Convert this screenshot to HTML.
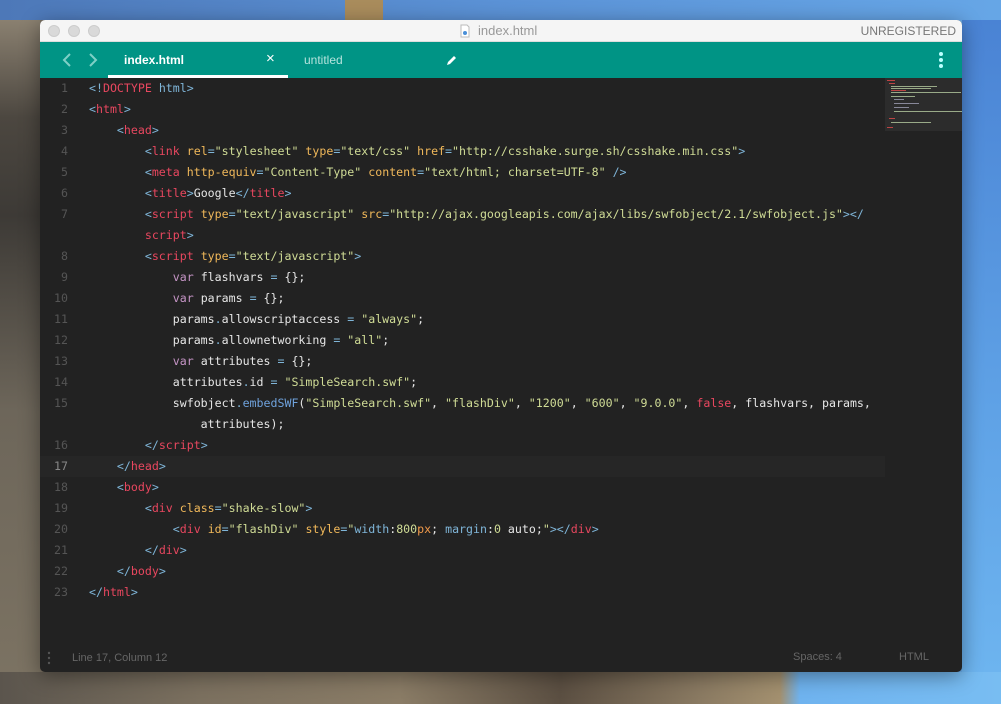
<!DOCTYPE html>
<html><head><style>
*{margin:0;padding:0;box-sizing:border-box}
body{width:1001px;height:704px;overflow:hidden;position:relative;font-family:"Liberation Sans",sans-serif;
background:linear-gradient(90deg,#6a6258 0,#7a7061 40px,#5a89c8 700px,#6aaeea 1001px);}
.bgtop{position:absolute;left:0;top:0;width:1001px;height:20px;background:linear-gradient(90deg,#4d78b8,#5b92d6 50%,#66a6e6)}
.tower{position:absolute;left:345px;top:0;width:38px;height:20px;background:#a98c5c}
.bgbot{position:absolute;left:0;top:672px;width:1001px;height:32px;background:linear-gradient(90deg,#5b554d 0,#7b705f 200px,#8a7c66 400px,#5b4f42 560px,#8a7a62 700px,#a3906f 780px,#6fb3ef 800px,#78bdf2 1001px)}
.bgleft{position:absolute;left:0;top:20px;width:40px;height:652px;background:linear-gradient(180deg,#8a8070,#4c4740 15%,#3d3a36 30%,#6d665a 60%,#7b7262)}
.bgright{position:absolute;left:962px;top:20px;width:39px;height:652px;background:linear-gradient(180deg,#4a83d4,#5fa2e6 60%,#6db4ef)}
.win{position:absolute;left:40px;top:20px;width:922px;height:652px;border-radius:5px;overflow:hidden;background:#222;box-shadow:0 4px 20px rgba(0,0,0,.4)}
.title{height:22px;background:#f5f5f5;border-bottom:1px solid #ddd;position:relative}
.dot{position:absolute;top:5px;width:12px;height:12px;border-radius:50%;background:#d9d9d9;border:1px solid #ccc}
.ttl{position:absolute;left:438px;top:3px;font-size:13px;color:#999}
.unreg{position:absolute;right:6px;top:4px;font-size:12px;color:#777}
.tabs{height:36px;background:#009485;position:relative;color:#fff}
.tabs span{position:absolute}
.code{position:absolute;left:0;top:58px;width:922px;font-family:"DejaVu Sans Mono","Liberation Mono",monospace;font-size:11.6px;}
.l{position:absolute;left:49px;white-space:pre;color:#e6e6e6;height:21px;line-height:21px}
.n{left:0;width:28px;text-align:right;color:#555}
.b{color:#7fb5d8}.t{color:#e8475f}.a{color:#f0b85a}.s{color:#d0dc96}.k{color:#c594c5}.f{color:#6fa2dc}.o{color:#f29a4a}
.status{position:absolute;left:0;bottom:0;width:922px;height:28px;font-size:11px;color:#666}
.mm{position:absolute;height:1px}
</style></head><body>
<div class="bgtop"></div><div class="tower"></div><div class="bgleft"></div><div class="bgright"></div><div class="bgbot"></div>
<div class="win">
 <div class="title">
  <div class="dot" style="left:8px"></div><div class="dot" style="left:28px"></div><div class="dot" style="left:48px"></div>
  <svg style="position:absolute;left:420px;top:4px" width="10" height="14"><path d="M1 1h6l2 2v10H1z" fill="#fff" stroke="#bbb"/><circle cx="5" cy="9" r="2" fill="#4a8fd8"/></svg>
  <div class="ttl">index.html</div><div class="unreg">UNREGISTERED</div>
 </div>
 <div class="tabs">
  <svg style="position:absolute;left:22px;top:11px" width="10" height="14"><path d="M8 1L2 7l6 6" stroke="#7fd0c6" stroke-width="2" fill="none"/></svg>
  <svg style="position:absolute;left:48px;top:11px" width="10" height="14"><path d="M2 1l6 6-6 6" stroke="#7fd0c6" stroke-width="2" fill="none"/></svg>
  <span style="left:84px;top:11px;font-size:12px;font-weight:bold">index.html</span>
  <span style="left:226px;top:8px;font-size:15px">×</span>
  <div style="position:absolute;left:68px;top:33px;width:180px;height:3px;background:#fff"></div>
  <span style="left:264px;top:11px;font-size:12px;color:#b5e3dd">untitled</span>
  <svg style="position:absolute;left:406px;top:13px" width="11" height="11"><path d="M1 10l1-3 6-6 2 2-6 6z" fill="#fff"/></svg>
  <svg style="position:absolute;left:898px;top:9px" width="6" height="18"><circle cx="3" cy="3" r="2" fill="#bff"/><circle cx="3" cy="9" r="2" fill="#bff"/><circle cx="3" cy="15" r="2" fill="#bff"/></svg>
 </div>
 <div style="position:absolute;left:845px;top:58px;width:77px;height:53px;background:#2c2c2c">
  <div class="mm" style="left:2px;top:2px;width:8px;background:#b44"></div>
  <div class="mm" style="left:4px;top:5px;width:6px;background:#b44"></div>
  <div class="mm" style="left:6px;top:8px;width:46px;background:#9a8"></div>
  <div class="mm" style="left:6px;top:10px;width:40px;background:#9a8"></div>
  <div class="mm" style="left:6px;top:12px;width:15px;background:#b44"></div>
  <div class="mm" style="left:6px;top:14px;width:70px;background:#9a8"></div>
  <div class="mm" style="left:6px;top:18px;width:24px;background:#9a8"></div>
  <div class="mm" style="left:9px;top:21px;width:10px;background:#889"></div>
  <div class="mm" style="left:9px;top:25px;width:25px;background:#889"></div>
  <div class="mm" style="left:9px;top:29px;width:15px;background:#889"></div>
  <div class="mm" style="left:9px;top:33px;width:68px;background:#9a8"></div>
  <div class="mm" style="left:4px;top:40px;width:6px;background:#b44"></div>
  <div class="mm" style="left:6px;top:44px;width:40px;background:#9a8"></div>
  <div class="mm" style="left:2px;top:49px;width:6px;background:#b44"></div>
 </div>
 <div style="position:absolute;left:0;top:436px;width:845px;height:21px;background:#262626"></div>
 <div class="code">
<div class="l n" style="top:0">1</div><div class="l" style="top:0"><span class="b">&lt;!</span><span class="t">DOCTYPE</span> <span class="b">html&gt;</span></div>
<div class="l n" style="top:21px">2</div><div class="l" style="top:21px"><span class="b">&lt;</span><span class="t">html</span><span class="b">&gt;</span></div>
<div class="l n" style="top:42px">3</div><div class="l" style="top:42px">    <span class="b">&lt;</span><span class="t">head</span><span class="b">&gt;</span></div>
<div class="l n" style="top:63px">4</div><div class="l" style="top:63px">        <span class="b">&lt;</span><span class="t">link</span> <span class="a">rel</span><span class="b">=</span><span class="s">"stylesheet"</span> <span class="a">type</span><span class="b">=</span><span class="s">"text/css"</span> <span class="a">href</span><span class="b">=</span><span class="s">"http://csshake.surge.sh/csshake.min.css"</span><span class="b">&gt;</span></div>
<div class="l n" style="top:84px">5</div><div class="l" style="top:84px">        <span class="b">&lt;</span><span class="t">meta</span> <span class="a">http-equiv</span><span class="b">=</span><span class="s">"Content-Type"</span> <span class="a">content</span><span class="b">=</span><span class="s">"text/html; charset=UTF-8"</span> <span class="b">/&gt;</span></div>
<div class="l n" style="top:105px">6</div><div class="l" style="top:105px">        <span class="b">&lt;</span><span class="t">title</span><span class="b">&gt;</span>Google<span class="b">&lt;/</span><span class="t">title</span><span class="b">&gt;</span></div>
<div class="l n" style="top:126px">7</div><div class="l" style="top:126px">        <span class="b">&lt;</span><span class="t">script</span> <span class="a">type</span><span class="b">=</span><span class="s">"text/javascript"</span> <span class="a">src</span><span class="b">=</span><span class="s">"http://ajax.googleapis.com/ajax/libs/swfobject/2.1/swfobject.js"</span><span class="b">&gt;&lt;/</span></div>
<div class="l" style="top:147px">        <span class="t">script</span><span class="b">&gt;</span></div>
<div class="l n" style="top:168px">8</div><div class="l" style="top:168px">        <span class="b">&lt;</span><span class="t">script</span> <span class="a">type</span><span class="b">=</span><span class="s">"text/javascript"</span><span class="b">&gt;</span></div>
<div class="l n" style="top:189px">9</div><div class="l" style="top:189px">            <span class="k">var</span> flashvars <span class="b">=</span> {};</div>
<div class="l n" style="top:210px">10</div><div class="l" style="top:210px">            <span class="k">var</span> params <span class="b">=</span> {};</div>
<div class="l n" style="top:231px">11</div><div class="l" style="top:231px">            params<span class="b">.</span>allowscriptaccess <span class="b">=</span> <span class="s">"always"</span>;</div>
<div class="l n" style="top:252px">12</div><div class="l" style="top:252px">            params<span class="b">.</span>allownetworking <span class="b">=</span> <span class="s">"all"</span>;</div>
<div class="l n" style="top:273px">13</div><div class="l" style="top:273px">            <span class="k">var</span> attributes <span class="b">=</span> {};</div>
<div class="l n" style="top:294px">14</div><div class="l" style="top:294px">            attributes<span class="b">.</span>id <span class="b">=</span> <span class="s">"SimpleSearch.swf"</span>;</div>
<div class="l n" style="top:315px">15</div><div class="l" style="top:315px">            swfobject<span class="b">.</span><span class="f">embedSWF</span>(<span class="s">"SimpleSearch.swf"</span>, <span class="s">"flashDiv"</span>, <span class="s">"1200"</span>, <span class="s">"600"</span>, <span class="s">"9.0.0"</span>, <span class="t">false</span>, flashvars, params,</div>
<div class="l" style="top:336px">                attributes);</div>
<div class="l n" style="top:357px">16</div><div class="l" style="top:357px">        <span class="b">&lt;/</span><span class="t">script</span><span class="b">&gt;</span></div>
<div class="l n" style="top:378px;color:#888">17</div><div class="l" style="top:378px">    <span class="b">&lt;/</span><span class="t">head</span><span class="b">&gt;</span></div>
<div class="l n" style="top:399px">18</div><div class="l" style="top:399px">    <span class="b">&lt;</span><span class="t">body</span><span class="b">&gt;</span></div>
<div class="l n" style="top:420px">19</div><div class="l" style="top:420px">        <span class="b">&lt;</span><span class="t">div</span> <span class="a">class</span><span class="b">=</span><span class="s">"shake-slow"</span><span class="b">&gt;</span></div>
<div class="l n" style="top:441px">20</div><div class="l" style="top:441px">            <span class="b">&lt;</span><span class="t">div</span> <span class="a">id</span><span class="b">=</span><span class="s">"flashDiv"</span> <span class="a">style</span><span class="b">=</span><span class="s">"</span><span class="b">width</span>:<span class="s">800</span><span class="o">px</span>; <span class="b">margin</span>:<span class="s">0</span> auto;<span class="s">"</span><span class="b">&gt;&lt;/</span><span class="t">div</span><span class="b">&gt;</span></div>
<div class="l n" style="top:462px">21</div><div class="l" style="top:462px">        <span class="b">&lt;/</span><span class="t">div</span><span class="b">&gt;</span></div>
<div class="l n" style="top:483px">22</div><div class="l" style="top:483px">    <span class="b">&lt;/</span><span class="t">body</span><span class="b">&gt;</span></div>
<div class="l n" style="top:504px">23</div><div class="l" style="top:504px"><span class="b">&lt;/</span><span class="t">html</span><span class="b">&gt;</span></div>
 </div>
 <div class="status">
  <svg style="position:absolute;left:7px;top:7px" width="4" height="14"><circle cx="2" cy="2" r="1.2" fill="#555"/><circle cx="2" cy="7" r="1.2" fill="#555"/><circle cx="2" cy="12" r="1.2" fill="#555"/></svg>
  <span style="position:absolute;left:32px;top:8px">Line 17, Column 12</span>
  <span style="position:absolute;left:753px;top:7px">Spaces: 4</span>
  <span style="position:absolute;left:859px;top:7px">HTML</span>
 </div>
</div>
</body></html>
